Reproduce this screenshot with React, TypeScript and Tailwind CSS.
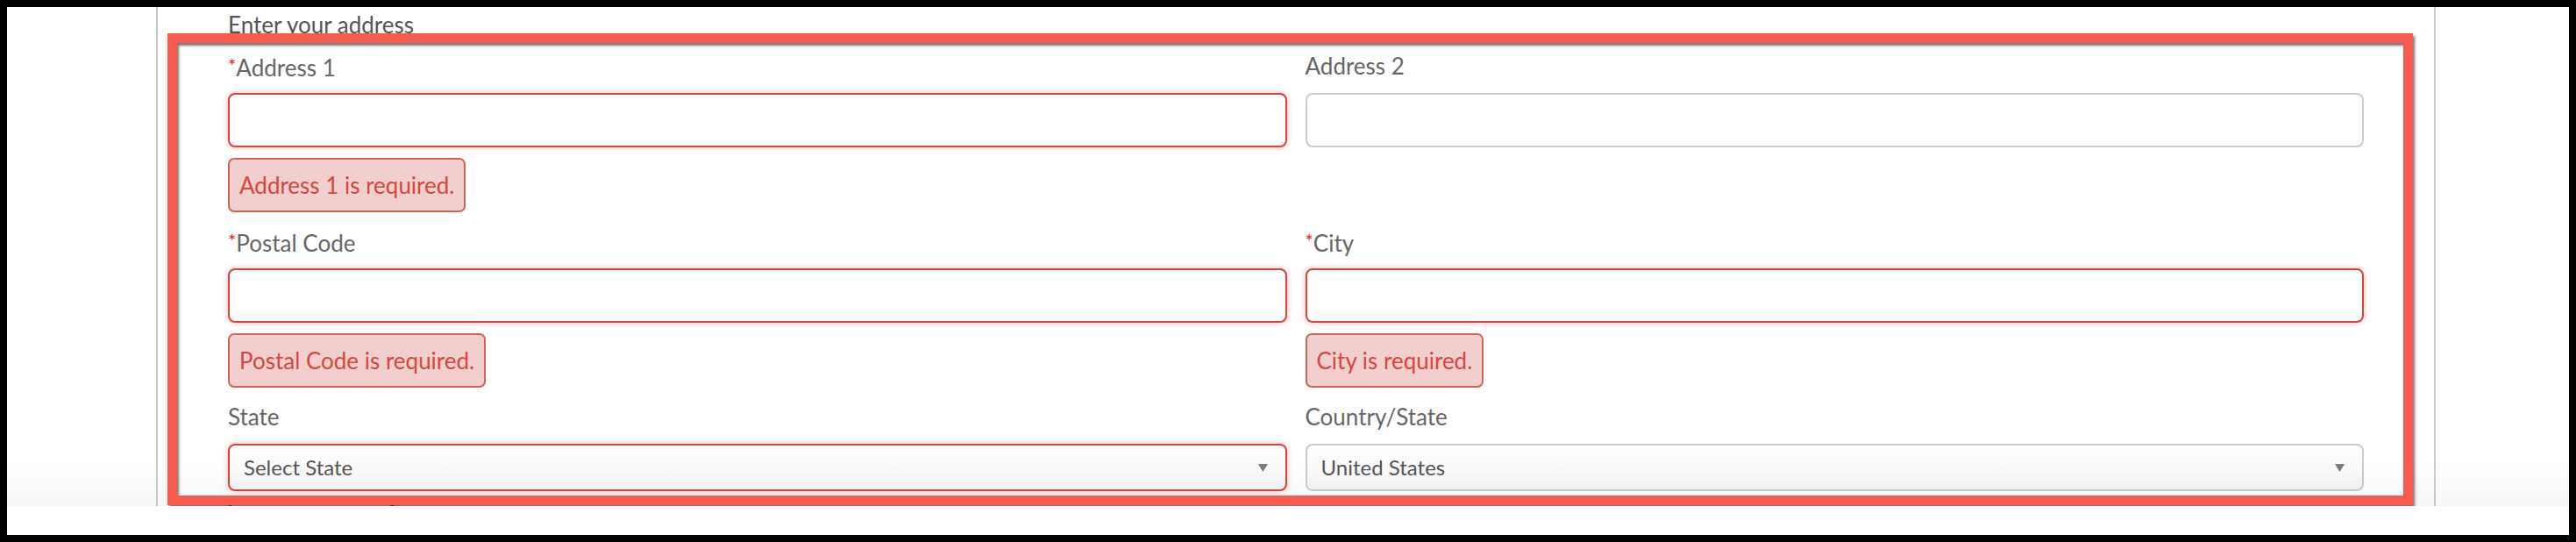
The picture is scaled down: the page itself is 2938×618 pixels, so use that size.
import React from "react";

const labelCls = "block h-[34px] leading-[30px] text-[26px] text-[#666] whitespace-nowrap";
const inputCls = "block w-full h-[62px] rounded-[8px] border-2 bg-white";
const inputErrCls = "border-[#cd4a42] shadow-[0_0_6px_rgba(217,83,79,0.45)]";
const inputOkCls = "border-[#cbcbcb]";
const errorCls =
  "self-start mt-[12px] h-[62px] flex items-center px-[11px] rounded-[7px] border-2 border-[#d0625c] bg-[#f2cfcf] text-[26px] text-[#d9463e] whitespace-nowrap";

function Req() {
  return <span className="text-[#e3241b] text-[22px] align-[4px]">*</span>;
}

function Arrow() {
  return (
    <svg width="11" height="9" viewBox="0 0 11 9" className="shrink-0">
      <polygon points="0,0 11,0 5.5,9" fill="#7a7a7a" />
    </svg>
  );
}

function Field({
  label,
  required,
  error,
}: {
  label: string;
  required?: boolean;
  error?: string;
}) {
  return (
    <div className="flex flex-col">
      <label className={labelCls}>
        {required && <Req />}
        {label}
      </label>
      <div className="mt-[12px]">
        <div className={`${inputCls} ${error ? inputErrCls : inputOkCls}`} />
      </div>
      {error && <div className={errorCls}>{error}</div>}
    </div>
  );
}

function SelectField({
  label,
  value,
  invalid,
}: {
  label: string;
  value: string;
  invalid?: boolean;
}) {
  return (
    <div className="flex flex-col">
      <label className={labelCls}>{label}</label>
      <div
        className={`mt-[12px] h-[54px] rounded-[8px] border-2 bg-gradient-to-b from-white to-[#f5f5f5] flex items-center justify-between pl-[16px] pr-[20px] ${
          invalid ? inputErrCls : inputOkCls
        }`}
      >
        <span className="text-[24px] text-[#555]">{value}</span>
        <Arrow />
      </div>
    </div>
  );
}

export default function App() {
  return (
    <div className="w-[2938px] h-[618px] bg-black p-[8px] font-['Lato',sans-serif]">
      <div className="h-full bg-white flex flex-col">
        <div className="relative h-[569px] overflow-hidden bg-white">
          <div className="ml-[170px] w-[2600px] h-full border-x-2 border-[#cccccc] px-[80px] pt-[3px]">
            <div className="h-[34px] leading-[34px] text-[26px] text-[#555]">Enter your address</div>
            <div className="mt-[15px] grid grid-cols-2 gap-x-[21px] gap-y-[18px] items-start">
              <Field label="Address 1" required error="Address 1 is required." />
              <Field label="Address 2" />
              <Field label="Postal Code" required error="Postal Code is required." />
              <Field label="City" required error="City is required." />
              <SelectField label="State" value="Select State" invalid />
              <SelectField label="Country/State" value="United States" />
            </div>
            <div className="mt-[14px] w-[190px] h-[50px] rounded-[6px] border-2 border-[#555] bg-white" />
          </div>

          {/* soft shade along the bottom of the page */}
          <div className="pointer-events-none absolute inset-x-0 bottom-0 h-[50px] bg-gradient-to-b from-transparent to-[rgba(0,0,0,0.03)]" />

          {/* annotation frame drawn over the form */}
          <div className="pointer-events-none absolute left-[183px] top-[30px] w-[2561px] h-[538px] border-[11px] border-[#fa5a4c] shadow-[2px_3px_3px_rgba(0,0,0,0.55),inset_2px_3px_3px_rgba(0,0,0,0.55)]" />
        </div>
        <div className="flex-1 bg-white" />
      </div>
    </div>
  );
}
